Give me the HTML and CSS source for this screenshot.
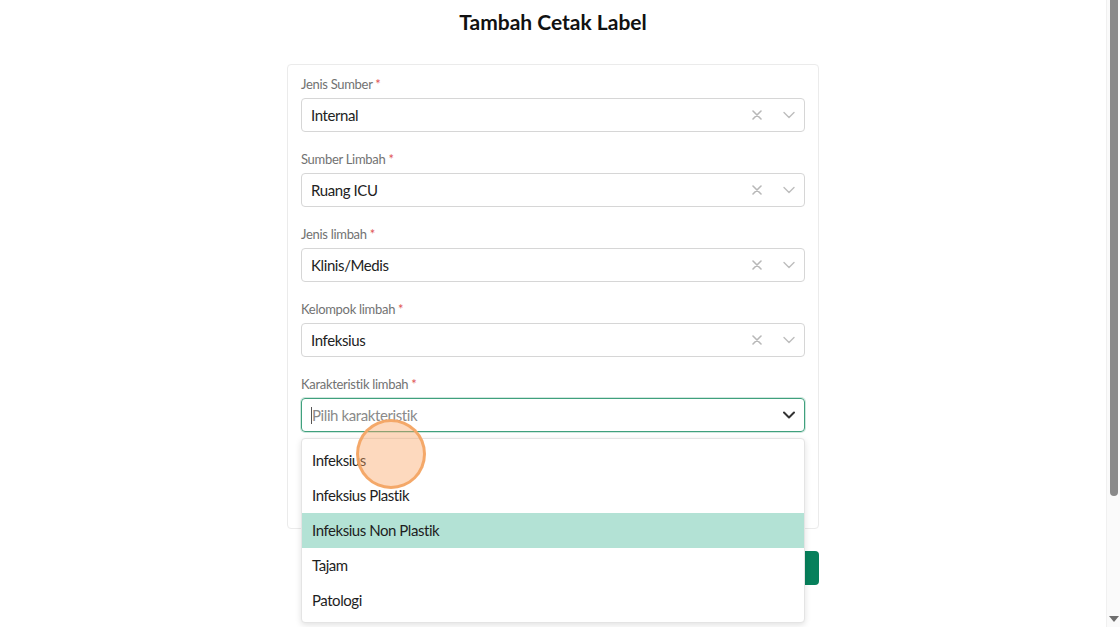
FILE: index.html
```html
<!DOCTYPE html>
<html lang="id">
<head>
<meta charset="utf-8">
<title>Tambah Cetak Label</title>
<link rel="stylesheet" href="styles.css">
</head>
<body>
<div class="app">
  <main class="page">
    <h1 class="title">Tambah Cetak Label</h1>
    <form class="card">
      <div class="field">
        <label class="label">Jenis Sumber <span class="req">*</span></label>
        <div class="select">
          <span class="value">Internal</span>
          <span class="icons">
            <svg class="clear" width="10" height="10" viewBox="0 0 10 10"><path d="M1 1L9 9M9 1L1 9" stroke="currentColor" stroke-width="1.6" stroke-linecap="round"/></svg>
            <svg class="chev" width="12" height="8" viewBox="0 0 12 8"><path d="M1 1.5L6 6.5L11 1.5" fill="none" stroke="currentColor" stroke-width="1.4" stroke-linecap="round" stroke-linejoin="round"/></svg>
          </span>
        </div>
      </div>
      <div class="field">
        <label class="label">Sumber Limbah <span class="req">*</span></label>
        <div class="select">
          <span class="value">Ruang ICU</span>
          <span class="icons">
            <svg class="clear" width="10" height="10" viewBox="0 0 10 10"><path d="M1 1L9 9M9 1L1 9" stroke="currentColor" stroke-width="1.6" stroke-linecap="round"/></svg>
            <svg class="chev" width="12" height="8" viewBox="0 0 12 8"><path d="M1 1.5L6 6.5L11 1.5" fill="none" stroke="currentColor" stroke-width="1.4" stroke-linecap="round" stroke-linejoin="round"/></svg>
          </span>
        </div>
      </div>
      <div class="field">
        <label class="label">Jenis limbah <span class="req">*</span></label>
        <div class="select">
          <span class="value">Klinis/Medis</span>
          <span class="icons">
            <svg class="clear" width="10" height="10" viewBox="0 0 10 10"><path d="M1 1L9 9M9 1L1 9" stroke="currentColor" stroke-width="1.6" stroke-linecap="round"/></svg>
            <svg class="chev" width="12" height="8" viewBox="0 0 12 8"><path d="M1 1.5L6 6.5L11 1.5" fill="none" stroke="currentColor" stroke-width="1.4" stroke-linecap="round" stroke-linejoin="round"/></svg>
          </span>
        </div>
      </div>
      <div class="field">
        <label class="label">Kelompok limbah <span class="req">*</span></label>
        <div class="select">
          <span class="value">Infeksius</span>
          <span class="icons">
            <svg class="clear" width="10" height="10" viewBox="0 0 10 10"><path d="M1 1L9 9M9 1L1 9" stroke="currentColor" stroke-width="1.6" stroke-linecap="round"/></svg>
            <svg class="chev" width="12" height="8" viewBox="0 0 12 8"><path d="M1 1.5L6 6.5L11 1.5" fill="none" stroke="currentColor" stroke-width="1.4" stroke-linecap="round" stroke-linejoin="round"/></svg>
          </span>
        </div>
      </div>
      <div class="field field-open">
        <label class="label">Karakteristik limbah <span class="req">*</span></label>
        <div class="select select-focus">
          <span class="caret"></span>
          <span class="placeholder">Pilih karakteristik</span>
          <span class="icons">
            <svg class="chev chev-dark" width="12" height="8" viewBox="0 0 12 8"><path d="M1 1.5L6 6.5L11 1.5" fill="none" stroke="currentColor" stroke-width="2" stroke-linecap="round" stroke-linejoin="round"/></svg>
          </span>
        </div>
        <ul class="menu">
          <li class="option">Infeksius</li>
          <li class="option">Infeksius Plastik</li>
          <li class="option option-active">Infeksius Non Plastik</li>
          <li class="option">Tajam</li>
          <li class="option">Patologi</li>
        </ul>
        <span class="click-dot"></span>
      </div>
      <div class="spacer"></div>
    </form>
    <div class="actions">
      <button type="button" class="btn">Simpan</button>
    </div>
  </main>
  <div class="scrollbar">
    <div class="thumb"></div>
    <div class="arrow"></div>
  </div>
</div>
</body>
</html>
```

FILE: styles.css
```css
* { box-sizing: border-box; }
html, body {
  margin: 0;
  padding: 0;
  height: 100%;
  overflow: hidden;
  background: #ffffff;
  font-family: Lato, "Open Sans", "Liberation Sans", sans-serif;
  color: #222;
}
.app {
  display: flex;
  height: 627px;
}
.page {
  flex: 1;
  display: flex;
  flex-direction: column;
  align-items: center;
  padding-top: 9px;
}
.title {
  margin: 0;
  font-size: 21px;
  line-height: 26px;
  font-weight: 700;
  color: #111;
}
.card {
  margin-top: 29px;
  width: 532px;
  border: 1px solid #ebebeb;
  border-radius: 4px;
  padding: 11px 13px 0;
  display: flex;
  flex-direction: column;
}
.field {
  display: flex;
  flex-direction: column;
  margin-bottom: 19px;
  position: relative;
}
.label {
  font-size: 13px;
  line-height: 17px;
  letter-spacing: -0.3px;
  color: #727272;
  margin-bottom: 5px;
}
.req { color: #e05555; }
.select {
  height: 34px;
  border: 1px solid #d6d6d6;
  border-radius: 4px;
  display: flex;
  align-items: center;
  padding: 0 9px;
  font-size: 15px;
  letter-spacing: -0.4px;
  color: #222;
}
.value { flex: 1; }
.placeholder { flex: 1; color: #8a8a8a; }
.caret {
  width: 1px;
  height: 17px;
  background: #555;
}
.icons {
  display: flex;
  align-items: center;
  gap: 21px;
  color: #bdbdbd;
}
.clear { color: #b8b8b8; }
.chev-dark { color: #333; }
.select-focus {
  border: 1.5px solid #3fa07d;
  box-shadow: 0 0 0 1px rgba(63,160,125,0.25);
}
.menu {
  position: absolute;
  left: 0;
  right: 0;
  top: 62px;
  margin: 0;
  padding: 4px 0;
  list-style: none;
  background: #fff;
  border: 1px solid #e4e4e4;
  border-radius: 4px;
  box-shadow: 0 2px 6px rgba(0,0,0,0.12);
  z-index: 5;
}
.option {
  height: 35px;
  line-height: 35px;
  padding: 0 10px;
  font-size: 15px;
  letter-spacing: -0.45px;
  color: #1e1e1e;
}
.option-active { background: #b3e2d5; }
.click-dot {
  position: absolute;
  left: 55px;
  top: 43px;
  width: 70px;
  height: 70px;
  border-radius: 50%;
  background: rgba(250, 165, 100, 0.42);
  border: 3px solid rgba(243, 165, 100, 0.95);
  z-index: 6;
}
.spacer { height: 77px; }
.actions {
  width: 532px;
  display: flex;
  justify-content: flex-end;
  margin-top: 22px;
}
.btn {
  height: 34px;
  width: 110px;
  border: none;
  border-radius: 4px;
  background: #07805b;
  color: #fff;
  font-family: inherit;
  font-size: 15px;
}
.scrollbar {
  width: 14px;
  background: #fafafa;
  position: relative;
  display: flex;
  flex-direction: column;
  align-items: center;
  border-left: 1px solid #f0f0f0;
}
.thumb {
  width: 8px;
  height: 496px;
  background: #8a8a8a;
  border-radius: 0 0 4px 4px;
}
.arrow {
  margin-top: auto;
  margin-bottom: 5px;
  width: 0;
  height: 0;
  border-left: 5px solid transparent;
  border-right: 5px solid transparent;
  border-top: 6px solid #6e6e6e;
}
```
